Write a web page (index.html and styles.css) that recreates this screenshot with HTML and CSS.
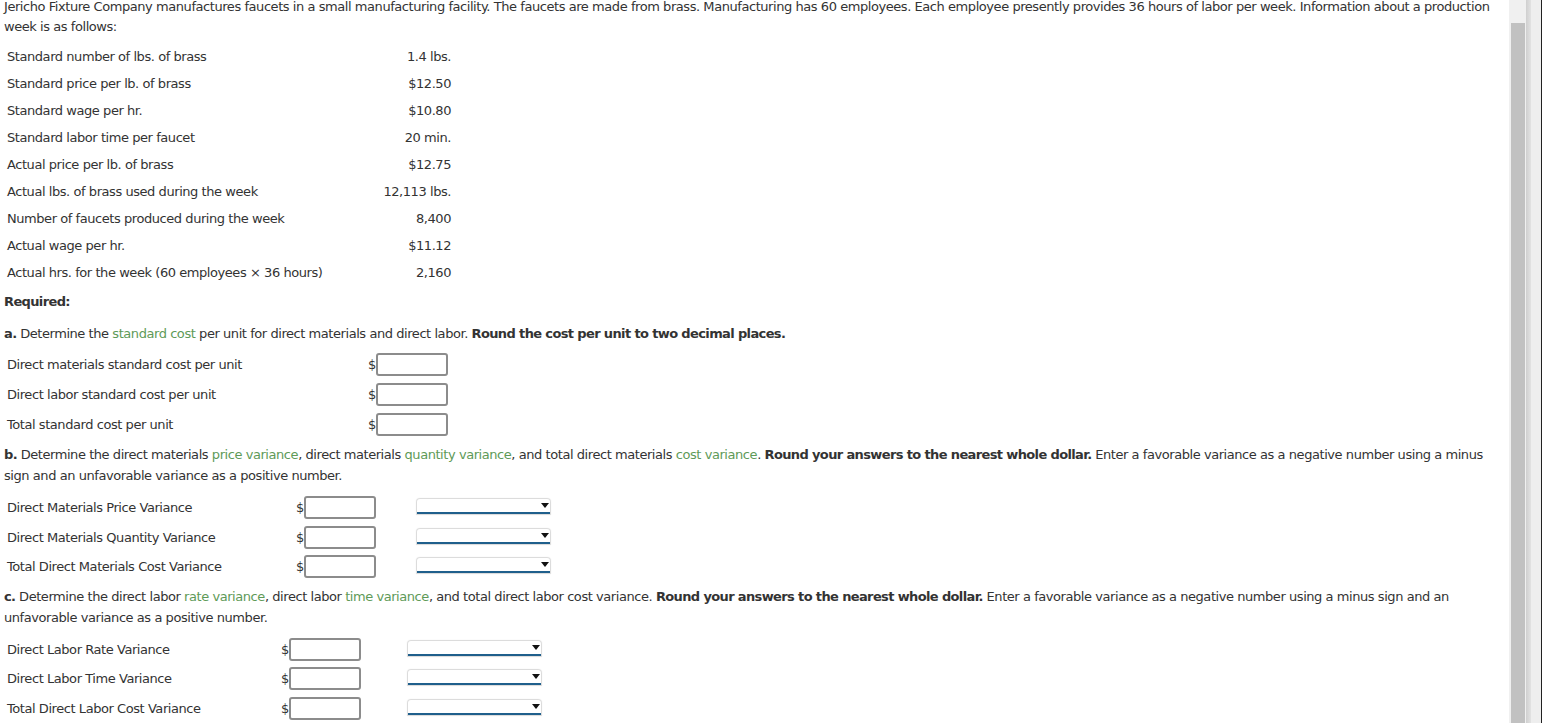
FILE: index.html
```html
<!DOCTYPE html>
<html>
<head>
<meta charset="utf-8">
<link rel="stylesheet" href="styles.css">
</head>
<body>
<div class="frame">
  <div class="page">
    <p class="intro">Jericho Fixture Company manufactures faucets in a small manufacturing facility. The faucets are made from brass. Manufacturing has 60 employees. Each employee presently provides 36 hours of labor per week. Information about a production week is as follows:</p>
    <table class="data">
      <tr><td>Standard number of lbs. of brass</td><td class="val">1.4 lbs.</td></tr>
      <tr><td>Standard price per lb. of brass</td><td class="val">$12.50</td></tr>
      <tr><td>Standard wage per hr.</td><td class="val">$10.80</td></tr>
      <tr><td>Standard labor time per faucet</td><td class="val">20 min.</td></tr>
      <tr><td>Actual price per lb. of brass</td><td class="val">$12.75</td></tr>
      <tr><td>Actual lbs. of brass used during the week</td><td class="val">12,113 lbs.</td></tr>
      <tr><td>Number of faucets produced during the week</td><td class="val">8,400</td></tr>
      <tr><td>Actual wage per hr.</td><td class="val">$11.12</td></tr>
      <tr><td>Actual hrs. for the week (60 employees &times; 36 hours)</td><td class="val">2,160</td></tr>
    </table>
    <p class="req"><b>Required:</b></p>
    <p class="q qa"><b>a.</b> Determine the <span class="term">standard cost</span> per unit for direct materials and direct labor. <b>Round the cost per unit to two decimal places.</b></p>
    <table class="ans ans-a">
      <tr><td class="lbl">Direct materials standard cost per unit</td><td class="cell"><span class="dol">$</span><span class="inp"></span></td></tr>
      <tr><td class="lbl">Direct labor standard cost per unit</td><td class="cell"><span class="dol">$</span><span class="inp"></span></td></tr>
      <tr><td class="lbl">Total standard cost per unit</td><td class="cell"><span class="dol">$</span><span class="inp"></span></td></tr>
    </table>
    <p class="q qb"><b>b.</b> Determine the direct materials <span class="term">price variance</span>, direct materials <span class="term">quantity variance</span>, and total direct materials <span class="term">cost variance</span>. <b>Round your answers to the nearest whole dollar.</b> Enter a favorable variance as a negative number using a minus sign and an unfavorable variance as a positive number.</p>
    <table class="ans ans-b">
      <tr><td class="lbl">Direct Materials Price Variance</td><td class="cell"><span class="dol">$</span><span class="inp"></span></td><td class="selcell"><span class="sel"><span class="arrow"></span></span></td></tr>
      <tr><td class="lbl">Direct Materials Quantity Variance</td><td class="cell"><span class="dol">$</span><span class="inp"></span></td><td class="selcell"><span class="sel"><span class="arrow"></span></span></td></tr>
      <tr><td class="lbl">Total Direct Materials Cost Variance</td><td class="cell"><span class="dol">$</span><span class="inp"></span></td><td class="selcell"><span class="sel"><span class="arrow"></span></span></td></tr>
    </table>
    <p class="q qc"><b>c.</b> Determine the direct labor <span class="term">rate variance</span>, direct labor <span class="term">time variance</span>, and total direct labor cost variance. <b>Round your answers to the nearest whole dollar.</b> Enter a favorable variance as a negative number using a minus sign and an unfavorable variance as a positive number.</p>
    <table class="ans ans-c">
      <tr><td class="lbl">Direct Labor Rate Variance</td><td class="cell"><span class="dol">$</span><span class="inp"></span></td><td class="selcell"><span class="sel"><span class="arrow"></span></span></td></tr>
      <tr><td class="lbl">Direct Labor Time Variance</td><td class="cell"><span class="dol">$</span><span class="inp"></span></td><td class="selcell"><span class="sel"><span class="arrow"></span></span></td></tr>
      <tr><td class="lbl">Total Direct Labor Cost Variance</td><td class="cell"><span class="dol">$</span><span class="inp"></span></td><td class="selcell"><span class="sel"><span class="arrow"></span></span></td></tr>
    </table>
  </div>
  <div class="vscroll"><div class="thumb"></div></div>
  <div class="outer"><div class="outer-shade"></div><div class="outer-track"></div><div class="outer-edge"></div></div>
</div>
</body>
</html>
```
FILE: styles.css
```css
html, body {
  margin: 0;
  padding: 0;
  background: #fff;
}
body {
  font-family: "DejaVu Sans", Verdana, sans-serif;
  font-size: 13px;
  letter-spacing: -0.44px;
  color: #333;
  overflow: hidden;
}
b {
  letter-spacing: -0.63px;
}
.frame {
  display: flex;
  height: 723px;
  overflow: hidden;
}
.page {
  width: 1509px;
  flex: none;
  box-sizing: border-box;
  padding: 0 8px 0 4px;
  overflow: hidden;
}
p {
  margin: 0;
}
.intro {
  line-height: 20px;
  margin-top: -3px;
}
.term {
  color: #5e9a58;
}
table {
  border-collapse: collapse;
}
td {
  padding: 0 3px;
  vertical-align: middle;
}
.data {
  width: 450px;
  margin-top: 6px;
}
.data td {
  height: 27px;
  line-height: 15px;
}
.data .val {
  text-align: right;
}
.req {
  line-height: 20px;
  margin-top: 6px;
}
.q {
  line-height: 21px;
}
.qa {
  margin-top: 11px;
}
.ans td {
  height: 30px;
}
.ans .cell {
  white-space: nowrap;
  font-size: 0;
}
.dol {
  display: inline-block;
  font-size: 13px;
  vertical-align: middle;
}
.inp {
  display: inline-block;
  vertical-align: middle;
  box-sizing: border-box;
  width: 72px;
  height: 23px;
  border: 2px solid #8c8c8c;
  border-radius: 3px;
  background: #fff;
}
.ans-a {
  margin-top: 5px;
}
.ans-a .lbl {
  width: 355px;
}
.qb {
  margin-top: 5px;
}
.ans-b {
  margin-top: 7px;
}
.ans-b td {
  height: 29.5px;
}
.ans-b .lbl {
  width: 283px;
}
.ans-b .selcell {
  padding-left: 38px;
}
.qc {
  margin-top: 4px;
}
.ans-c {
  margin-top: 7px;
}
.ans-c td {
  height: 29.5px;
}
.ans-c .lbl {
  width: 268px;
}
.ans-c .selcell {
  padding-left: 44px;
}
.sel {
  position: relative;
  display: block;
  box-sizing: border-box;
  width: 133px;
  height: 15px;
  margin-top: -2px;
  background: #fff;
  border-radius: 3px 3px 0 0;
  box-shadow: 0 0 1px 1px #d9d9d9;
  border-bottom: 2px solid #1f5f8c;
}
.arrow {
  position: absolute;
  right: 1px;
  top: 4px;
  width: 0;
  height: 0;
  border-left: 4px solid transparent;
  border-right: 4px solid transparent;
  border-top: 5px solid #111;
}
.vscroll {
  flex: none;
  width: 17px;
  background: #f0f0f0;
  position: relative;
}
.thumb {
  margin: 23px 1px 0 2px;
  height: 700px;
  background: #c1c1c1;
}
.outer {
  flex: none;
  display: flex;
  width: 16px;
}
.outer-shade {
  width: 5px;
  background: linear-gradient(to right, #cfcfcf, #e2e2e2);
}
.outer-track {
  width: 10px;
  background: #eeeeee;
}
.outer-edge {
  width: 1px;
  background: #222;
}
```
